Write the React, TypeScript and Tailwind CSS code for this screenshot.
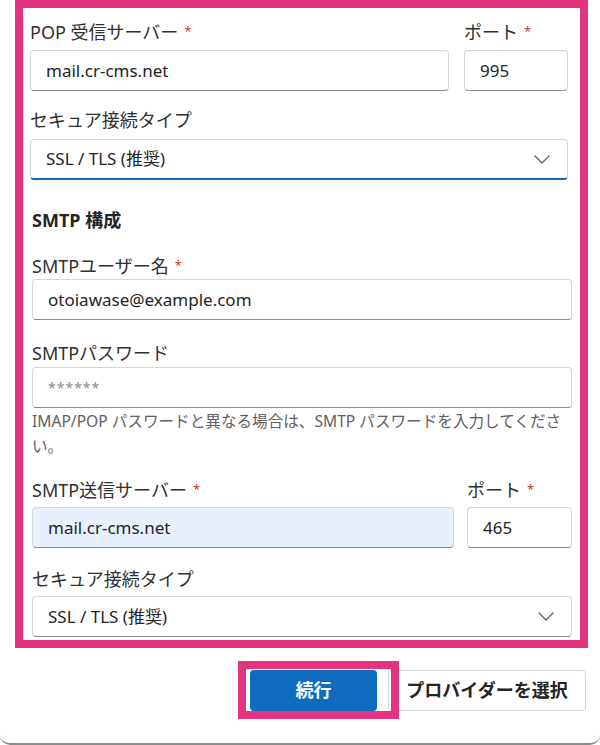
import { ReactNode } from "react";

function Label({ children, required }: { children: ReactNode; required?: boolean }) {
  return (
    <div className="h-6 leading-6 text-[18px] text-[#303030] whitespace-nowrap">
      {children}
      {required && <span className="ml-[6px] text-[13px] align-[3px] text-[#d13438]">*</span>}
    </div>
  );
}

function Field({
  value,
  placeholder,
  autofill,
  className = "",
}: {
  value?: string;
  placeholder?: string;
  autofill?: boolean;
  className?: string;
}) {
  return (
    <div
      className={`h-[41px] rounded-[4px] border border-[#d6d6d6] border-b-[#8a8a8a] flex items-center px-[15px] ${
        autofill ? "bg-[#e8f0fe]" : "bg-white"
      } ${className}`}
    >
      {value ? (
        <span className="text-[17px] text-[#242424]">{value}</span>
      ) : (
        <span className="text-[14px] text-[#8a8a8a] tracking-[1px]">{placeholder}</span>
      )}
    </div>
  );
}

function Select({ focused, className = "" }: { focused?: boolean; className?: string }) {
  return (
    <div
      className={`h-[41px] rounded-[4px] border border-[#d6d6d6] bg-white flex items-center justify-between pl-[15px] pr-[17px] ${
        focused ? "border-b-2 border-b-[#0f6cbd]" : "border-b-[#8a8a8a]"
      } ${className}`}
    >
      <span className="text-[17px] text-[#242424]">SSL / TLS (推奨)</span>
      <svg width="16" height="9" viewBox="0 0 16 9" fill="none">
        <path d="M1 1l7 7 7-7" stroke="#616161" strokeWidth="1.3" strokeLinecap="round" strokeLinejoin="round" />
      </svg>
    </div>
  );
}

export default function App() {
  return (
    <div className="w-[600px] h-[745px] bg-white font-['Noto_Sans','Noto_Sans_CJK_JP',sans-serif]">
      <div className="h-[745px] border-b-2 border-[#8c8c8c] rounded-b-[10px] flex flex-col">
        {/* Form area (highlighted) */}
        <div className="ml-[15px] w-[573px] h-[648px] border-[8px] border-[#e5347f] overflow-hidden">
          {/* POP */}
          <div className="ml-[7px] w-[538px] pt-[11px]">
            <div className="flex gap-[15px]">
              <div className="flex-1">
                <Label required>POP 受信サーバー</Label>
                <Field value="mail.cr-cms.net" className="mt-[7px]" />
              </div>
              <div className="w-[104px]">
                <Label required>ポート</Label>
                <Field value="995" className="mt-[7px]" />
              </div>
            </div>
            <div className="mt-[17px]">
              <Label>セキュア接続タイプ</Label>
              <Select focused className="mt-[7px]" />
            </div>
          </div>

          {/* SMTP */}
          <div className="ml-[9px] w-[540px]">
            <div className="mt-[28px] h-6 leading-6 text-[18px] font-bold text-[#242424]">SMTP 構成</div>
            <div className="mt-[21px]">
              <Label required>SMTPユーザー名</Label>
              <Field value="otoiawase@example.com" className="mt-[2px]" />
            </div>
            <div className="mt-[21px]">
              <Label>SMTPパスワード</Label>
              <Field placeholder="******" className="mt-[2px]" />
              <p className="mt-[1px] text-[15.6px] leading-[25px] text-[#616161] whitespace-nowrap">
                IMAP/POP パスワードと異なる場合は、SMTP パスワードを入力してくださ
                <br />
                い。
              </p>
            </div>
            <div className="mt-[18px] flex gap-[13px]">
              <div className="flex-1">
                <Label required>SMTP送信サーバー</Label>
                <Field value="mail.cr-cms.net" autofill className="mt-[6px]" />
              </div>
              <div className="w-[105px]">
                <Label required>ポート</Label>
                <Field value="465" className="mt-[6px]" />
              </div>
            </div>
            <div className="mt-[19px]">
              <Label>セキュア接続タイプ</Label>
              <Select className="mt-[5px]" />
            </div>
          </div>
        </div>

        {/* Footer buttons */}
        <div className="mt-[22px] flex justify-end gap-[11px] pr-[14px]">
          <div className="relative">
            <button className="w-[127px] h-[41px] rounded-[4px] bg-[#0f6cbd] text-white text-[18px] font-bold">
              続行
            </button>
            <div className="absolute left-[-12px] right-[-22px] top-[-9px] bottom-[-8px] border-[8px] border-[#e5347f]" />
          </div>
          <button className="w-[198px] h-[41px] rounded-[4px] border border-[#d1d1d1] bg-white text-[#242424] text-[18px] font-bold">
            プロバイダーを選択
          </button>
        </div>
      </div>
    </div>
  );
}
